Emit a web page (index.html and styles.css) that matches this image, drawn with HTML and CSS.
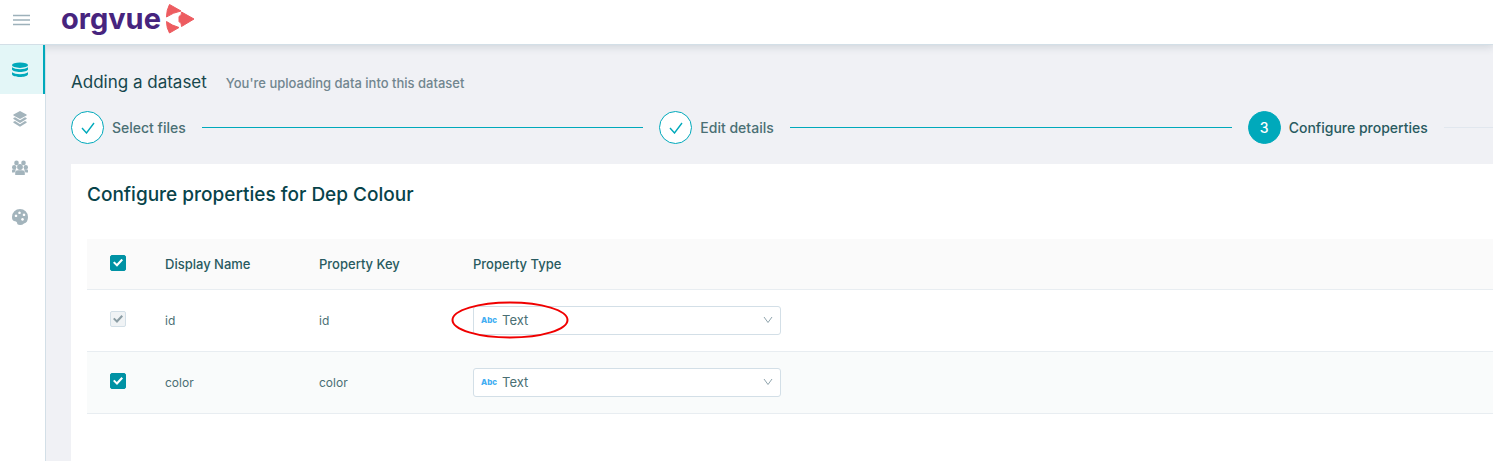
FILE: index.html
```html
<!DOCTYPE html>
<html lang="en">
<head>
<meta charset="utf-8">
<meta name="viewport" content="width=device-width, initial-scale=1">
<title>Orgvue - Adding a dataset</title>
<link rel="stylesheet" href="styles.css">
</head>
<body>
<header class="topbar">
  <button class="menu-button" type="button" aria-label="Menu">
    <svg width="18" height="12" viewBox="0 0 18 12"><path d="M1 1.500h17M1 6h17M1 10.500h17" fill="none" stroke="currentColor" stroke-width="1.300"/></svg>
  </button>
  <a class="logo" href="#"><span class="logo-text">orgvue</span>
    <svg width="30" height="32" viewBox="0 0 30 32" aria-hidden="true"><g fill="#ed5c60" stroke="#ed5c60" stroke-width="1" stroke-linejoin="round"><path d="M4.500 1.500 16 8Q8 9.500 1.500 14 1.500 7 4.500 1.500z"/><path d="M1.500 18.500Q7 22.500 14 24.500L4.500 30Q1.500 25 1.500 18.500z"/><path d="M16.500 9 29 16 16.500 23.500Q17 20.500 14 18.500V13.500Q17 12 16.500 9z"/></g></svg>
  </a>
</header>
<div class="shell">
  <nav class="sidebar" aria-label="Main">
    <a class="side-link active" href="#" aria-label="Datasets">
      <svg width="16" height="16" viewBox="0 0 16 16" fill="currentColor"><ellipse cx="8" cy="3.200" rx="8" ry="2.700"/><path d="M0 5.200C3 7.800 13 7.800 16 5.200V7.500C15 10.800 1 10.800 0 7.500zM0 10.200C3 12.800 13 12.800 16 10.200V12.300C15 16 1 16 0 12.300z"/></svg>
    </a>
    <a class="side-link" href="#" aria-label="Layers">
      <svg width="16" height="16" viewBox="0 0 16 16" fill="currentColor"><path d="M8 0 14.500 3.500Q15 4 14.500 4.500L8 8 1.500 4.500Q1 4 1.500 3.500zM1.500 7 3 6.200 8 9.200 13 6.200 14.500 7Q15 7.500 14.500 8L8 12 1.500 8Q1 7.500 1.500 7zM1.500 10.800 3 10 8 13.200 13 10 14.500 10.800Q15 11.300 14.500 11.800L8 15.800 1.500 11.800Q1 11.300 1.500 10.800z"/></svg>
    </a>
    <a class="side-link" href="#" aria-label="People">
      <svg width="16" height="16" viewBox="0 0 16 16" fill="currentColor"><circle cx="4.500" cy="2.900" r="2.300"/><circle cx="11.500" cy="2.900" r="2.300"/><circle cx="2.200" cy="7.200" r="2.200"/><circle cx="13.800" cy="7.200" r="2.200"/><circle cx="8" cy="7" r="2.900"/><path d="M0 12.500V10.500Q0 9.300 2 9.300H4L2.500 12.500zM16 12.500V10.500Q16 9.300 14 9.300H12L13.500 12.500zM3.200 15V12.500Q3.200 10.200 6 10.200H10Q12.800 10.200 12.800 12.500V15z"/></svg>
    </a>
    <a class="side-link" href="#" aria-label="Colours">
      <svg width="16" height="16" viewBox="0 0 16 16" fill="currentColor"><path fill-rule="evenodd" d="M8 0A8 8 0 0 1 16 8Q16 13.500 12 14.500 10.500 16 8 16 5 16 5 13.500 4.500 12.200 2 12 0 11.500 0 8A8 8 0 0 1 8 0zM4 5.500a1.300 1.300 0 1 0 .01 0zM7.500 2.500a1.300 1.300 0 1 0 .01 0zM12 4.500a1.300 1.300 0 1 0 .01 0zM10.500 9a1.400 1.400 0 1 0 .01 0z"/></svg>
    </a>
  </nav>
  <main class="content">
    <div class="heading">
      <h1>Adding a dataset</h1>
      <p>You're uploading data into this dataset</p>
    </div>
    <ol class="steps">
      <li class="step"><span class="step-icon"><svg width="14" height="12" viewBox="0 0 14 12"><path d="M1 6l4.500 5L13 1" fill="none" stroke="currentColor" stroke-width="1.400"/></svg></span><span class="step-label">Select files</span></li>
      <li class="step"><span class="step-icon"><svg width="14" height="12" viewBox="0 0 14 12"><path d="M1 6l4.500 5L13 1" fill="none" stroke="currentColor" stroke-width="1.400"/></svg></span><span class="step-label">Edit details</span></li>
      <li class="step current" aria-current="step"><span class="step-icon">3</span><span class="step-label">Configure properties</span></li>
    </ol>
    <section class="card">
      <h2>Configure properties for Dep Colour</h2>
      <table class="properties">
        <thead>
          <tr><th class="check-cell"><input type="checkbox" aria-label="Select all" checked></th><th class="name-cell">Display Name</th><th class="name-cell">Property Key</th><th>Property Type</th></tr>
        </thead>
        <tbody>
          <tr><td class="check-cell"><input type="checkbox" aria-label="Select id" checked disabled></td><td>id</td><td>id</td>
            <td><div class="type-field"><span class="type-tag">Abc</span><select aria-label="Type of id"><option>Text</option></select><svg class="chevron" width="10" height="8" viewBox="0 0 10 8"><path d="M1 1l4 5.500L9 1" fill="none" stroke="currentColor"/></svg><svg class="marker" width="118" height="38" viewBox="0 0 118 38"><ellipse cx="59" cy="19" rx="57.500" ry="17.500" fill="none" stroke="#f00000" stroke-width="2"/></svg></div></td></tr>
          <tr class="striped"><td class="check-cell"><input type="checkbox" aria-label="Select color" checked></td><td>color</td><td>color</td>
            <td><div class="type-field"><span class="type-tag">Abc</span><select aria-label="Type of color"><option>Text</option></select><svg class="chevron" width="10" height="8" viewBox="0 0 10 8"><path d="M1 1l4 5.500L9 1" fill="none" stroke="currentColor"/></svg></div></td></tr>
        </tbody>
      </table>
    </section>
  </main>
</div>
</body>
</html>
```
FILE: styles.css
```css
* {
  box-sizing: border-box;
}

body {
  margin: 0;
  min-height: 100vh;
  display: flex;
  flex-direction: column;
  font-family: Inter, "Liberation Sans", sans-serif;
  font-size: 13px;
  color: #4a6f74;
  background: #f0f1f5;
}

h1, h2, p, ol {
  margin: 0;
  padding: 0;
}

svg {
  display: block;
}

.topbar {
  position: relative;
  z-index: 1;
  display: flex;
  align-items: center;
  gap: 31px;
  height: 45px;
  padding: 0 12px 6px;
  background: #fff;
  border-bottom: 1px solid #d3dfe7;
  box-shadow: 0 2px 8px rgba(40, 60, 80, 0.16);
}

.menu-button {
  padding: 2px 0 0;
  border: 0;
  background: none;
  color: #9db1ba;
}

.logo {
  display: flex;
  align-items: center;
  gap: 4px;
  text-decoration: none;
}

.logo-text {
  font-family: Inter, sans-serif;
  font-weight: 700;
  font-size: 29px;
  line-height: 30px;
  color: #47247e;
}

.shell {
  flex: 1;
  display: flex;
}

.sidebar {
  position: relative;
  z-index: 2;
  flex: 0 0 45px;
  background: #fff;
  border-right: 1px solid #d3dfe7;
}

.side-link {
  display: flex;
  align-items: center;
  height: 49px;
  padding-left: 12px;
  color: #a3b4bc;
}

.side-link.active {
  width: 45px;
  color: #00a9bb;
  background: #e3f6f7;
  border-right: 2px solid #00a9bb;
}

.content {
  flex: 1;
  min-width: 0;
  display: flex;
  flex-direction: column;
  padding: 25px 0 0 25px;
}

.heading {
  display: flex;
  align-items: baseline;
  gap: 19px;
  line-height: 24px;
}

h1 {
  font-size: 17px;
  font-weight: 400;
  color: #16474d;
}

.heading p {
  font-weight: 500;
  color: #71868f;
}

.steps {
  display: grid;
  grid-template-columns: 7fr 7fr 3fr;
  gap: 16px;
  margin: 16px 0 20px;
  list-style: none;
}

.step {
  display: flex;
  align-items: center;
  font-size: 14px;
  font-weight: 500;
  white-space: nowrap;
}

.step::after {
  content: "";
  flex: 1;
  margin-left: 16px;
  border-top: 1px solid #00a9bb;
}

.step-icon {
  display: grid;
  place-items: center;
  width: 33px;
  height: 33px;
  margin-right: 8px;
  border: 1px solid #00a9bb;
  border-radius: 50%;
  color: #00a9bb;
  background: #fff;
}

.current {
  color: #285a60;
}

.current .step-icon {
  color: #fff;
  background: #00a9bb;
}

.current::after {
  border-color: #e1e7ee;
}

.card {
  flex: 1;
  padding: 16px 0 0 16px;
  background: #fff;
}

h2 {
  margin-bottom: 29px;
  font-size: 19px;
  font-weight: 500;
  line-height: 30px;
  color: #07434a;
}

.properties {
  width: 100%;
  border-collapse: collapse;
}

th, td {
  padding: 0;
  text-align: left;
  border-bottom: 1px solid #e8edf1;
}

th {
  height: 50px;
  font-weight: 500;
  color: #285a60;
  background: #fafafa;
}

td {
  height: 62px;
  font-size: 12px;
}

.striped {
  background: #f9fbfb;
}

.check-cell {
  width: 78px;
  padding: 0 0 2px 23px;
}

.name-cell {
  width: 154px;
}

input {
  appearance: none;
  display: grid;
  place-items: center;
  width: 16px;
  height: 16px;
  margin: 0;
  border: 1px solid #0092a4;
  border-radius: 2px;
  background: #0092a4;
  color: #fff;
}

input::after {
  content: "";
  width: 10px;
  height: 8px;
  background: currentColor;
  clip-path: polygon(0 50%, 15% 33%, 38% 62%, 85% 0, 100% 18%, 40% 100%);
}

input:disabled {
  border-color: #d3dfe7;
  background: #f0f3f5;
  color: #8c9ea5;
}

.type-field {
  position: relative;
  display: grid;
  align-items: center;
  width: 308px;
}

.type-tag {
  position: absolute;
  left: 8px;
  font-size: 8px;
  font-weight: 800;
  color: #42aef2;
}

select {
  appearance: none;
  width: 100%;
  height: 29px;
  padding: 0 28px;
  border: 1px solid #d3dfe7;
  border-radius: 3px;
  background: #fff;
  color: inherit;
  font: inherit;
  font-size: 13px;
}

.chevron {
  position: absolute;
  right: 8px;
  color: #8fa4ad;
  pointer-events: none;
}

.marker {
  position: absolute;
  left: -22px;
  pointer-events: none;
}
```
